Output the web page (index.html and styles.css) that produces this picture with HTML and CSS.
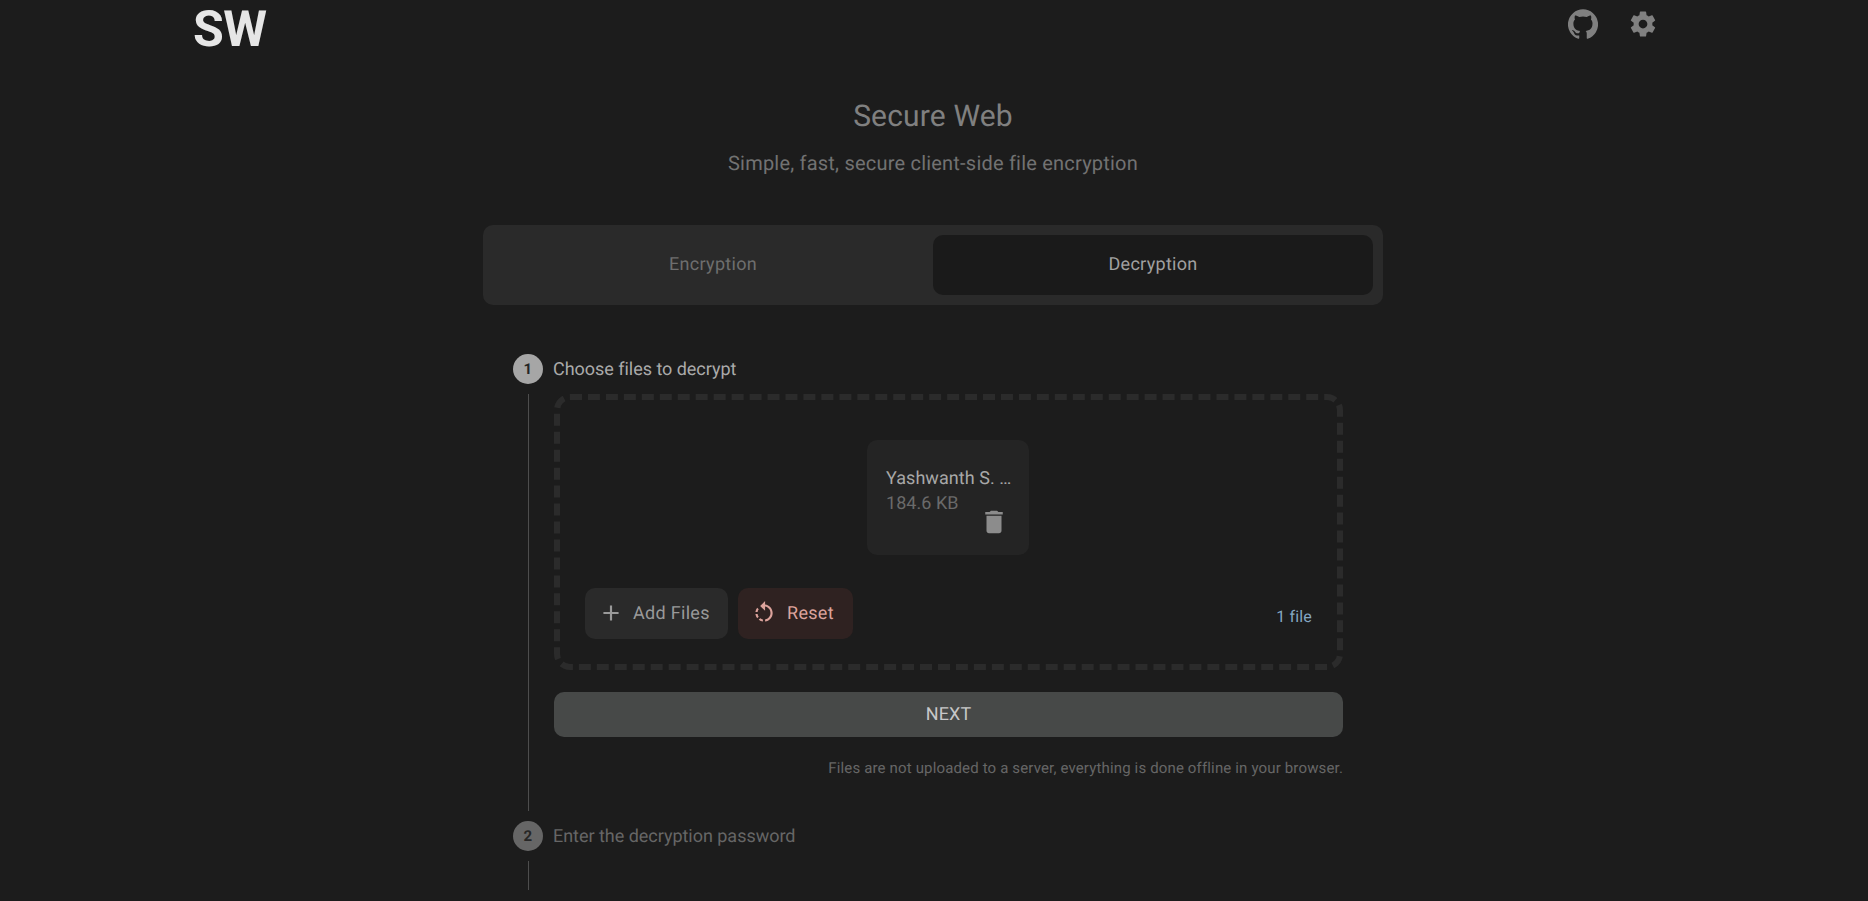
FILE: index.html
```html
<!DOCTYPE html>
<html lang="en">
<head>
<meta charset="utf-8">
<title>Secure Web</title>
<link rel="stylesheet" href="styles.css">
</head>
<body>
<header class="topbar">
  <div class="logo">SW</div>
  <div class="top-icons">
    <svg class="icon-30" viewBox="0 0 24 24"><path d="M12 .3a12 12 0 0 0-3.8 23.4c.6.1.8-.3.8-.6v-2c-3.3.7-4-1.6-4-1.6-.6-1.4-1.4-1.8-1.4-1.8-1-.7.1-.7.1-.7 1.2 0 1.9 1.2 1.9 1.2 1 1.8 2.8 1.3 3.5 1 0-.8.4-1.3.7-1.6-2.7-.3-5.5-1.3-5.5-6 0-1.2.5-2.3 1.3-3.1-.2-.4-.6-1.6 0-3.2 0 0 1-.3 3.4 1.2a11.5 11.5 0 0 1 6 0c2.3-1.5 3.3-1.2 3.3-1.2.6 1.6.2 2.8 0 3.2.9.8 1.3 1.9 1.3 3.2 0 4.6-2.8 5.6-5.5 5.9.5.4.9 1 .9 2.2v3.3c0 .3.1.7.8.6A12 12 0 0 0 12 .3"/></svg>
    <svg class="icon-30" viewBox="0 0 24 24"><path d="M19.43 12.98c.04-.32.07-.64.07-.98s-.03-.66-.07-.98l2.11-1.65c.19-.15.24-.42.12-.64l-2-3.46c-.12-.22-.39-.3-.61-.22l-2.49 1c-.52-.4-1.08-.73-1.69-.98l-.38-2.65C14.46 2.18 14.25 2 14 2h-4c-.25 0-.46.18-.49.42l-.38 2.65c-.61.25-1.17.59-1.69.98l-2.49-1c-.23-.09-.49 0-.61.22l-2 3.46c-.13.22-.07.49.12.64l2.11 1.65c-.04.32-.07.65-.07.98s.03.66.07.98l-2.11 1.65c-.19.15-.24.42-.12.64l2 3.46c.12.22.39.3.61.22l2.49-1c.52.4 1.08.73 1.69.98l.38 2.65c.03.24.24.42.49.42h4c.25 0 .46-.18.49-.42l.38-2.65c.61-.25 1.17-.59 1.69-.98l2.49 1c.23.09.49 0 .61-.22l2-3.46c.12-.22.07-.49-.12-.64l-2.11-1.65zM12 15.5c-1.93 0-3.5-1.57-3.5-3.5s1.57-3.5 3.5-3.5 3.5 1.57 3.5 3.5-1.57 3.5-3.5 3.5z"/></svg>
  </div>
</header>
<main class="main">
  <h1 class="title">Secure Web</h1>
  <p class="subtitle">Simple, fast, secure client-side file encryption</p>
  <div class="tabs">
    <div class="tab">Encryption</div>
    <div class="tab tab-active">Decryption</div>
  </div>
  <section class="stepper">
    <div class="step-head">
      <span class="step-num">1</span>
      <span class="step-label">Choose files to decrypt</span>
    </div>
    <div class="step-body">
      <div class="step-line"></div>
      <div class="step-content">
        <div class="dropzone">
          <div class="file-row">
            <div class="file-card">
              <div class="file-name">Yashwanth S. …</div>
              <div class="file-size">184.6 KB</div>
              <svg class="trash" viewBox="0 0 24 24"><path d="M6 19c0 1.1.9 2 2 2h8c1.1 0 2-.9 2-2V7H6v12zM19 4h-3.5l-1-1h-5l-1 1H5v2h14V4z"/></svg>
            </div>
          </div>
          <div class="drop-actions">
            <button class="btn btn-add">
              <svg class="btn-icon" viewBox="0 0 24 24"><path d="M19 13h-6v6h-2v-6H5v-2h6V5h2v6h6v2z"/></svg>
              Add Files
            </button>
            <button class="btn btn-reset">
              <svg class="btn-icon" viewBox="0 0 24 24"><path d="M7.11 8.53L5.7 7.11C4.8 8.27 4.24 9.61 4.07 11h2.02c.14-.87.49-1.72 1.02-2.47zM6.09 13H4.07c.17 1.39.72 2.73 1.62 3.89l1.41-1.42c-.52-.75-.87-1.59-1.01-2.47zm1.01 5.32c1.16.9 2.51 1.44 3.9 1.61V17.9c-.87-.15-1.71-.49-2.46-1.03L7.1 18.32zM13 4.07V1L8.45 5.55 13 10V6.09c2.84.48 5 2.94 5 5.91s-2.16 5.43-5 5.91v2.02c3.95-.49 7-3.85 7-7.93s-3.05-7.44-7-7.93z"/></svg>
              Reset
            </button>
            <span class="file-count">1 file</span>
          </div>
        </div>
        <button class="next-btn">NEXT</button>
        <p class="note">Files are not uploaded to a server, everything is done offline in your browser.</p>
      </div>
    </div>
    <div class="step-head step-off">
      <span class="step-num">2</span>
      <span class="step-label">Enter the decryption password</span>
    </div>
    <div class="step-line step-line-short"></div>
  </section>
</main>
</body>
</html>
```
FILE: styles.css
```css
* { box-sizing: border-box; }
html, body { height: 100%; }
body {
  margin: 0;
  padding-right: 2px;
  background: #1c1c1c;
  font-family: Roboto, "Liberation Sans", sans-serif;
  letter-spacing: 0.01em;
  text-rendering: geometricPrecision;
  overflow: hidden;
}
.topbar {
  width: 1488px;
  margin: 0 auto;
  height: 70px;
  padding: 0 19px 0 4px;
  display: flex;
  justify-content: space-between;
  align-items: flex-start;
}
.logo {
  font-size: 50px;
  font-weight: 700;
  line-height: 60px;
  letter-spacing: -0.5px;
  color: #e6e6e6;
}
.top-icons { display: flex; gap: 30px; padding-top: 9px; }
.icon-30 { width: 30px; height: 30px; fill: #808080; display: block; }
.main { width: 900px; margin: 0 auto; }
.title {
  margin: 27px 0 0;
  text-align: center;
  font-size: 30px;
  line-height: 40px;
  font-weight: 400;
  color: #808080;
}
.subtitle {
  margin: 11px 0 0;
  text-align: center;
  font-size: 20px;
  letter-spacing: 0.21px;
  line-height: 30px;
  color: #727272;
}
.tabs {
  margin-top: 47px;
  height: 80px;
  padding: 10px;
  display: flex;
  background: #2a2a2a;
  border-radius: 10px;
}
.tab {
  flex: 1;
  display: flex;
  align-items: center;
  justify-content: center;
  padding-bottom: 2px;
  font-size: 18px;
  letter-spacing: 0.3px;
  color: #6e6e6e;
  border-radius: 10px;
}
.tab-active { background: #1a1a1a; color: #a0a0a0; }
.stepper { padding: 49px 30px 0; }
.step-head { display: flex; align-items: center; gap: 10px; height: 30px; }
.step-num {
  width: 30px;
  height: 30px;
  border-radius: 50%;
  background: #a6a6a6;
  color: #262626;
  display: flex;
  align-items: center;
  justify-content: center;
  font-size: 15px;
  font-weight: 700;
}
.step-label { font-size: 18px; letter-spacing: -0.03px; color: #aaaaaa; }
.step-off .step-num { background: #666; }
.step-off .step-label { color: #666666; }
.step-body { display: flex; padding-top: 10px; padding-bottom: 10px; }
.step-line { width: 1px; margin-left: 15px; background: #4d4d4d; flex: none; }
.step-line-short { height: 29px; margin-top: 10px; }
.step-content { margin-left: 25px; width: 789px; padding-bottom: 33px; }
.dropzone {
  height: 276px;
  border: 6px dashed #2b2b2b;
  border-radius: 16px;
  padding: 40px 25px 0;
}
.file-row { display: flex; justify-content: center; margin-right: 1px; }
.file-card {
  position: relative;
  width: 162px;
  height: 115px;
  background: #242424;
  border-radius: 10px;
  padding: 26px 18px 0 19px;
}
.file-name { font-size: 18px; letter-spacing: 0.05px; line-height: 25px; color: #a8a8a8; white-space: nowrap; }
.file-size { font-size: 18px; letter-spacing: 0.05px; line-height: 25px; color: #6a6a6a; }
.trash {
  position: absolute;
  right: 20px;
  bottom: 18px;
  width: 30px;
  height: 30px;
  fill: #8c8c8c;
}
.drop-actions { display: flex; align-items: center; gap: 10px; margin-top: 33px; }
.btn {
  height: 51px;
  border: 0;
  border-radius: 10px;
  display: flex;
  align-items: center;
  gap: 9px;
  padding-bottom: 2px;
  font-family: inherit;
  font-size: 18px;
  letter-spacing: 0.3px;
  text-rendering: inherit;
}
.btn-icon { width: 26px; height: 26px; fill: currentColor; flex: none; }
.btn-add { width: 143px; padding-left: 13px; padding-right: 0; background: #2a2a2a; color: #999999; }
.btn-reset { width: 115px; padding-left: 13px; padding-right: 0; gap: 10px; background: #2f2221; color: #dca39c; }
.file-count { margin-left: auto; font-size: 16px; color: #84a6c2; padding-top: 6px; }
.next-btn {
  display: block;
  width: 100%;
  height: 45px;
  margin-top: 22px;
  border: 0;
  border-radius: 10px;
  background: #474948;
  color: #c8c8c8;
  font-family: inherit;
  font-size: 18px;
  letter-spacing: inherit;
  text-rendering: inherit;
}
.note {
  margin: 21px 0 0;
  text-align: right;
  font-size: 15px;
  letter-spacing: 0.15px;
  line-height: 20px;
  color: #666666;
}
```
